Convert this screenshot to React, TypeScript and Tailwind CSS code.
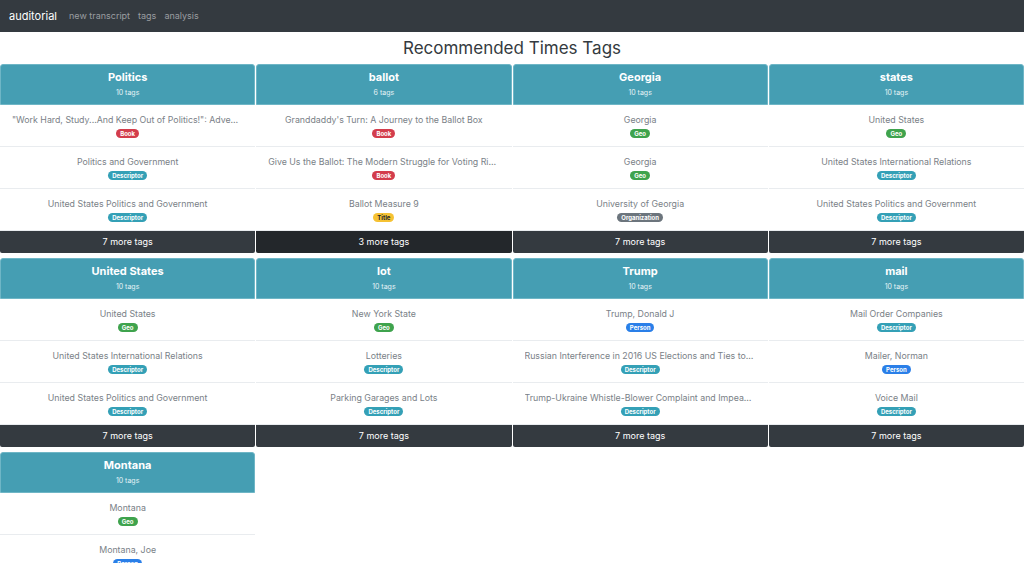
const badgeStyles: Record<string, string> = {
  Book: 'bg-[#d33d4c] text-white',
  Descriptor: 'bg-[#34a0b6] text-white',
  Geo: 'bg-[#3fa34d] text-white',
  Title: 'bg-[#f6c233] text-[#212529]',
  Organization: 'bg-[#6c757d] text-white',
  Person: 'bg-[#2a7fe8] text-white',
};

type Tag = { name: string; type: string };

const groups: { title: string; count: number; tags: Tag[]; more: number; active?: boolean }[] = [
  {
    title: 'Politics',
    count: 10,
    more: 7,
    tags: [
      { name: '"Work Hard, Study...And Keep Out of Politics!": Adventures and Lessons from an Unexpected Public Life', type: 'Book' },
      { name: 'Politics and Government', type: 'Descriptor' },
      { name: 'United States Politics and Government', type: 'Descriptor' },
    ],
  },
  {
    title: 'ballot',
    count: 6,
    more: 3,
    active: true,
    tags: [
      { name: "Granddaddy's Turn: A Journey to the Ballot Box", type: 'Book' },
      { name: 'Give Us the Ballot: The Modern Struggle for Voting Rights in America', type: 'Book' },
      { name: 'Ballot Measure 9', type: 'Title' },
    ],
  },
  {
    title: 'Georgia',
    count: 10,
    more: 7,
    tags: [
      { name: 'Georgia', type: 'Geo' },
      { name: 'Georgia', type: 'Geo' },
      { name: 'University of Georgia', type: 'Organization' },
    ],
  },
  {
    title: 'states',
    count: 10,
    more: 7,
    tags: [
      { name: 'United States', type: 'Geo' },
      { name: 'United States International Relations', type: 'Descriptor' },
      { name: 'United States Politics and Government', type: 'Descriptor' },
    ],
  },
  {
    title: 'United States',
    count: 10,
    more: 7,
    tags: [
      { name: 'United States', type: 'Geo' },
      { name: 'United States International Relations', type: 'Descriptor' },
      { name: 'United States Politics and Government', type: 'Descriptor' },
    ],
  },
  {
    title: 'lot',
    count: 10,
    more: 7,
    tags: [
      { name: 'New York State', type: 'Geo' },
      { name: 'Lotteries', type: 'Descriptor' },
      { name: 'Parking Garages and Lots', type: 'Descriptor' },
    ],
  },
  {
    title: 'Trump',
    count: 10,
    more: 7,
    tags: [
      { name: 'Trump, Donald J', type: 'Person' },
      { name: 'Russian Interference in 2016 US Elections and Ties to Trump Associates', type: 'Descriptor' },
      { name: 'Trump-Ukraine Whistle-Blower Complaint and Impeachment Inquiry', type: 'Descriptor' },
    ],
  },
  {
    title: 'mail',
    count: 10,
    more: 7,
    tags: [
      { name: 'Mail Order Companies', type: 'Descriptor' },
      { name: 'Mailer, Norman', type: 'Person' },
      { name: 'Voice Mail', type: 'Descriptor' },
    ],
  },
  {
    title: 'Montana',
    count: 10,
    more: 7,
    tags: [
      { name: 'Montana', type: 'Geo' },
      { name: 'Montana, Joe', type: 'Person' },
      { name: 'Montana State University', type: 'Organization' },
    ],
  },
];

export default function App() {
  return (
    <div className="min-h-screen bg-white font-['Inter','Liberation_Sans',sans-serif] text-[#212529]">
      <nav className="flex h-8 items-center bg-[#343a40] px-[9px]">
        <span className="text-[11px] text-white">auditorial</span>
        <div className="ml-[12px] flex gap-[8px] text-[9px] text-[#9a9da0]">
          <span>new transcript</span>
          <span>tags</span>
          <span>analysis</span>
        </div>
      </nav>

      <h1 className="flex h-8 items-center justify-center pt-[2px] text-[17px] text-[#343a40]">Recommended Times Tags</h1>

      <div className="grid grid-cols-4 gap-x-px gap-y-[5px]">
        {groups.map((g) => (
          <div key={g.title} className="flex flex-col">
            <div className="flex h-[41px] flex-col items-center justify-center rounded-t-[3px] border border-[#6fb6c6] bg-[#459eb3] pb-[1px] text-white">
              <span className="text-[11px] font-bold leading-[13px]">{g.title}</span>
              <span className="mt-[4px] text-[7px] leading-[9px] text-[#e6f3f6]">{g.count} tags</span>
            </div>
            {g.tags.map((t, i) => (
              <div
                key={i}
                className="flex h-[42px] flex-col items-center justify-center border-b border-[#e9ecef] px-3"
              >
                <span className="block w-full truncate text-center text-[8.8px] leading-[12px] text-[#7a8187]">{t.name}</span>
                <span
                  className={`mt-[3px] rounded-full px-[4px] text-[6px] font-bold leading-[9px] ${badgeStyles[t.type]}`}
                >
                  {t.type}
                </span>
              </div>
            ))}
            <div
              className={`flex h-[22px] items-center justify-center rounded-b-[2px] text-[9px] text-white ${
                g.active ? 'bg-[#23272b]' : 'bg-[#343a40]'
              }`}
            >
              {g.more} more tags
            </div>
          </div>
        ))}
      </div>
    </div>
  );
}
